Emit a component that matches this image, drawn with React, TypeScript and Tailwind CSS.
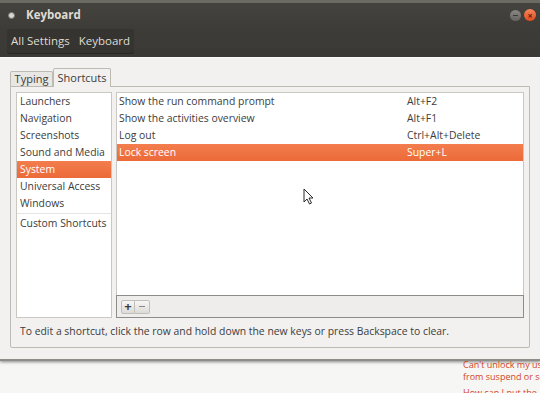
import React from "react";

const cats = [
  "Launchers",
  "Navigation",
  "Screenshots",
  "Sound and Media",
  "System",
  "Universal Access",
  "Windows",
];

const rows: [string, string][] = [
  ["Show the run command prompt", "Alt+F2"],
  ["Show the activities overview", "Alt+F1"],
  ["Log out", "Ctrl+Alt+Delete"],
  ["Lock screen", "Super+L"],
];

export default function App() {
  return (
    <div className="relative w-[540px] h-[393px] overflow-hidden bg-[#f6f6f5] font-['Open_Sans',sans-serif] text-[10.4px] text-[#3c3c3c] whitespace-nowrap">
      <div className="flex flex-col h-[361px] bg-[#f2f1f0] border-b-[2px] border-[#8f8d88] shadow-[0_1px_3px_rgba(0,0,0,0.45)]">
        {/* dark header */}
        <div className="h-[57px] flex flex-col bg-gradient-to-b from-[#46443f] via-[#3d3c38] to-[#3a3935]">
          <div className="h-[3px] bg-[#7c7a74] opacity-70" />
          <div className="h-[24px] flex items-center pl-[8px] pr-[4px]">
            <div className="w-[7px] h-[7px] rounded-full bg-[#d8d6d0] border border-[#7a7872]" />
            <span className="ml-[11px] font-bold text-[11.5px] text-[#dfdbd2]">Keyboard</span>
            <div className="flex-1" />
            <div className="w-[11px] h-[11px] rounded-full bg-gradient-to-b from-[#8a8883] to-[#65635f] flex items-center justify-center">
              <div className="w-[5px] h-[1px] bg-[#3a3935]" />
            </div>
            <div className="ml-[3px] w-[12px] h-[12px] rounded-full bg-gradient-to-b from-[#f6875a] to-[#df4a1b] flex items-center justify-center text-[9px] leading-none text-[#5a2410] font-bold">
              ×
            </div>
          </div>
          <div className="flex-1 flex items-center pl-[7px] pb-[2px]">
            <div className="h-[25px] flex items-center gap-[9px] rounded-[3px] bg-[#353430] px-[4px] text-[11.5px] text-[#dfdbd2] shadow-[inset_0_-1px_0_rgba(0,0,0,0.25)]">
              <span>All Settings</span>
              <span>Keyboard</span>
            </div>
          </div>
        </div>
        <div className="h-[1px] bg-[#fbfaf9]" />
        {/* body */}
        <div className="flex-1 pl-[10px] pt-[10px] flex flex-col">
          <div className="w-[520px] flex flex-col">
            {/* tabs */}
            <div className="flex items-end h-[18px] relative z-10">
              <div className="h-[15px] w-[43px] border border-b-0 border-[#bdbab4] rounded-t-[2px] bg-[#e9e7e4] flex items-center justify-center text-[11px] text-[#3c3c3c]">
                Typing
              </div>
              <div className="h-[19px] w-[58px] -mb-[1px] border border-b-0 border-[#bdbab4] rounded-t-[2px] bg-[#f2f1f0] flex items-center justify-center text-[11px] text-[#3c3c3c]">
                Shortcuts
              </div>
            </div>
            {/* page */}
            <div className="h-[262px] border border-[#bdbab4] rounded-b-[2px] bg-[#f2f1f0] px-[5px] pt-[5px] flex flex-col">
              <div className="flex gap-[4px] h-[226px]">
                {/* category list */}
                <div className="w-[96px] border border-[#cbc8c3] bg-white flex flex-col">
                  {cats.map((c) => (
                    <div
                      key={c}
                      className={
                        c === "System"
                          ? "h-[17px] flex items-center pl-[3px] bg-gradient-to-b from-[#f37d4d] to-[#ec6a38] text-white"
                          : "h-[17px] flex items-center pl-[3px]"
                      }
                    >
                      {c}
                    </div>
                  ))}
                  <div className="h-[1px] mt-[1px] bg-[#e6e4e0]" />
                  <div className="h-[17px] mt-[1px] flex items-center pl-[3px]">Custom Shortcuts</div>
                </div>
                {/* shortcuts list */}
                <div className="flex-1 flex flex-col">
                  <div className="flex-1 border border-[#cbc8c3] border-b-0 bg-white flex flex-col">
                    {rows.map(([a, b]) => (
                      <div
                        key={a}
                        className={
                          a === "Lock screen"
                            ? "h-[17px] flex items-center pl-[2px] bg-gradient-to-b from-[#f37d4d] to-[#ec6a38] text-white"
                            : "h-[17px] flex items-center pl-[2px]"
                        }
                      >
                        <span className="w-[288px]">{a}</span>
                        <span>{b}</span>
                      </div>
                    ))}
                  </div>
                  <div className="h-[23px] border border-[#8e8c88] bg-[#eeedeb] flex items-center pl-[4px]">
                    <div className="w-[14px] h-[14px] border border-[#c2bfba] rounded-l-[2px] bg-gradient-to-b from-[#f7f6f5] to-[#dddbd7] flex items-center justify-center text-[13px] leading-none font-bold text-[#3c3c3c]">
                      +
                    </div>
                    <div className="w-[15px] h-[14px] border border-l-0 border-[#c2bfba] rounded-r-[2px] bg-gradient-to-b from-[#f7f6f5] to-[#dddbd7] flex items-center justify-center">
                      <div className="w-[6px] h-[1px] bg-[#8a8884]" />
                    </div>
                  </div>
                </div>
              </div>
              <div className="flex-1 flex items-center pl-[4px] pb-[1px]">
                To edit a shortcut, click the row and hold down the new keys or press Backspace to clear.
              </div>
            </div>
          </div>
        </div>
      </div>
      {/* background page below window */}
      <div className="absolute left-[463px] top-[359px] text-[9px] leading-[12px] text-[#d2461e]">
        <div>Can't unlock my use</div>
        <div>from suspend or sc</div>
        <div className="mt-[4px]">How can I put the</div>
      </div>
      {/* cursor */}
      <svg className="absolute left-[303px] top-[188px]" width="12" height="18" viewBox="0 0 12 18">
        <path d="M1 1 L1 14 L4 11 L6.5 16 L8.5 15 L6 10 L10 10 Z" fill="#ffffff" stroke="#2a2a2a" strokeWidth="1" strokeLinejoin="round" />
      </svg>
    </div>
  );
}
